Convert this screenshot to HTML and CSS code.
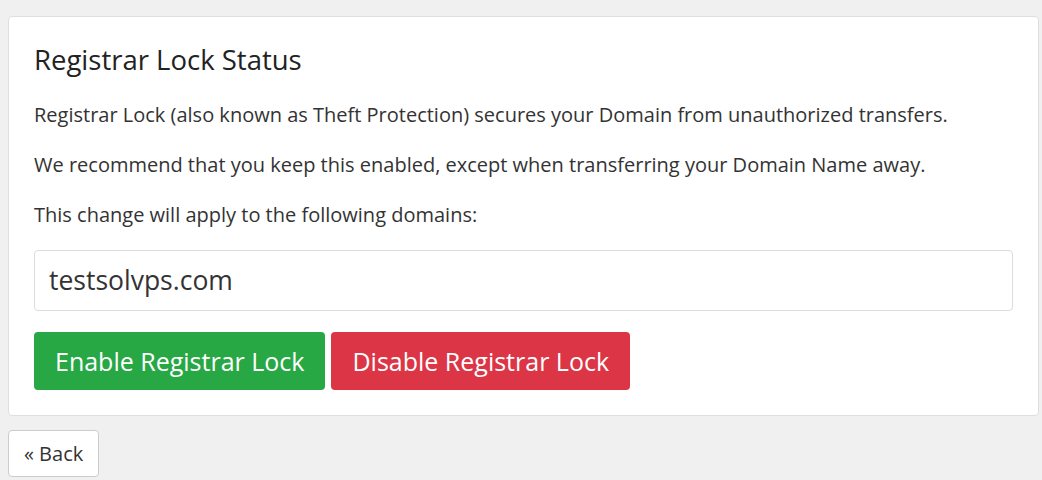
FILE: index.html
```html
<!DOCTYPE html>
<html>
<head>
<meta charset="utf-8">
<link rel="stylesheet" href="styles.css">
</head>
<body>
<div class="page">
  <div class="card">
    <h2 class="title">Registrar Lock Status</h2>
    <p class="text">Registrar Lock (also known as Theft Protection) secures your Domain from unauthorized transfers.</p>
    <p class="text">We recommend that you keep this enabled, except when transferring your Domain Name away.</p>
    <p class="text">This change will apply to the following domains:</p>
    <div class="domains">testsolvps.com</div>
    <div class="actions">
      <button class="btn btn-enable">Enable Registrar Lock</button>
      <button class="btn btn-disable">Disable Registrar Lock</button>
    </div>
  </div>
  <button class="back">&laquo; Back</button>
</div>
</body>
</html>
```
FILE: styles.css
```css
html, body {
  margin: 0;
  padding: 0;
  background: #f0f0f0;
}
body {
  font-family: "Open Sans", "Noto Sans", sans-serif;
  color: #333;
}
.page {
  padding: 16px 3px 0 8px;
}
.card {
  background: #fff;
  border: 1px solid #dedede;
  border-radius: 4px;
  padding: 26px 25px 25px 25px;
}
.title {
  margin: 0 0 23px 0;
  font-size: 27.5px;
  font-weight: 400;
  line-height: 34px;
  color: #222;
}
.text {
  margin: 0 0 20px 0;
  font-size: 20px;
  line-height: 30px;
}
.domains {
  border: 1px solid #dcdcdc;
  border-radius: 4px;
  height: 61px;
  box-sizing: border-box;
  padding: 0 14px 2px 14px;
  display: flex;
  align-items: center;
  font-size: 26.5px;
  color: #333;
  margin-bottom: 21px;
}
.actions {
  display: flex;
  gap: 6px;
}
.btn {
  font-family: inherit;
  font-size: 25px;
  border: none;
  border-radius: 4px;
  color: #fff;
  height: 58px;
  padding: 0 21px;
}
.btn-enable {
  background: #28a745;
}
.btn-disable {
  background: #dc3545;
}
.back {
  margin-top: 14px;
  font-family: inherit;
  font-size: 20px;
  color: #333;
  background: #fff;
  border: 1px solid #ccc;
  border-radius: 4px;
  height: 47px;
  padding: 0 15px;
}
```
